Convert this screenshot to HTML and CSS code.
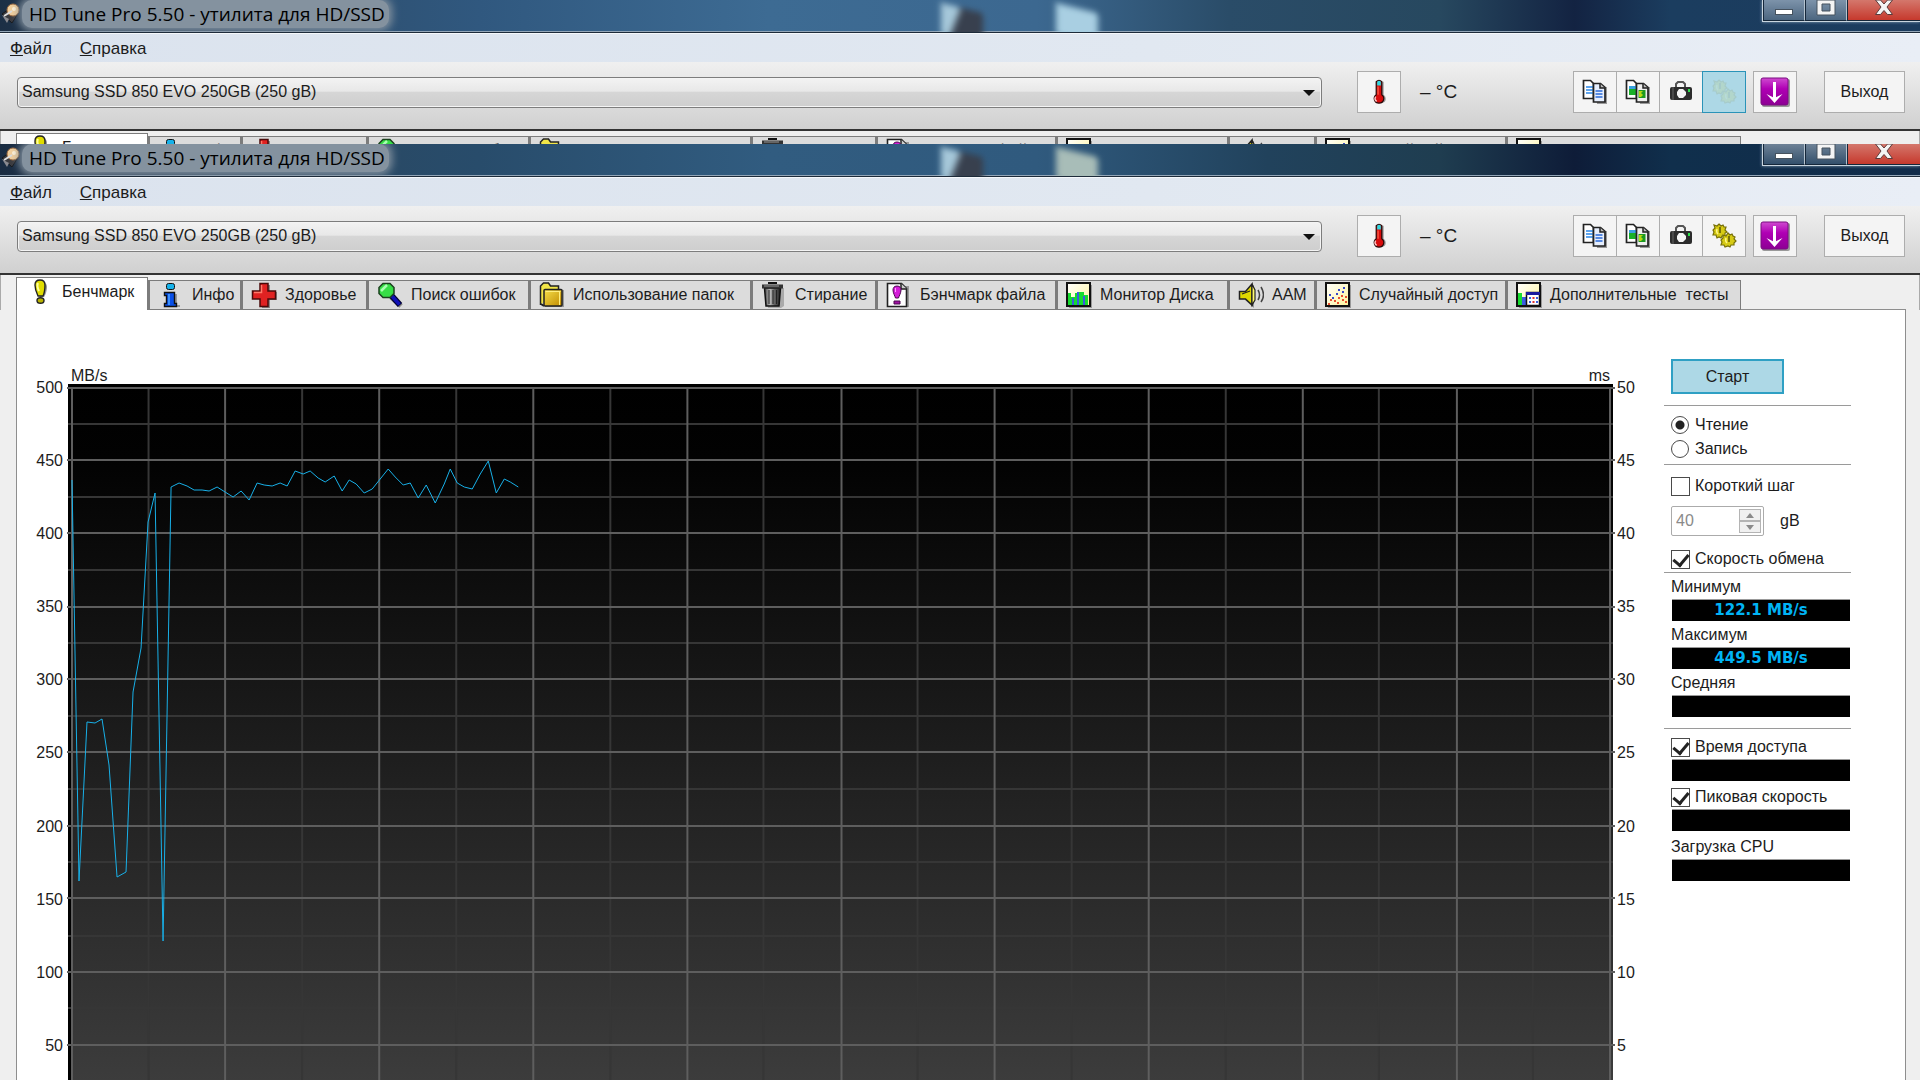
FILE: index.html
```html
<!DOCTYPE html>
<html lang="ru">
<head>
    <meta charset="UTF-8">
    <meta name="viewport" content="width=device-width, initial-scale=1.0">
    <title>HD Tune Pro 5.50 - утилита для HD/SSD</title>
    <link rel="stylesheet" href="styles.css">
</head>
<body>

<!-- Shared icons -->
<svg class="sprite" aria-hidden="true">
    <linearGradient id="gold" x1="0" y1="0" x2="1" y2="1"><stop offset="0" stop-color="#f6e04a"/><stop offset="1" stop-color="#c08a00"/></linearGradient>
    <linearGradient id="violet" x1="0" y1="0" x2="0" y2="1"><stop offset="0" stop-color="#cf4ad0"/><stop offset=".4" stop-color="#b000b4"/><stop offset="1" stop-color="#8d0094"/></linearGradient>
    <linearGradient id="steel"><stop offset="0" stop-color="#444"/><stop offset=".35" stop-color="#bbb"/><stop offset=".6" stop-color="#666"/><stop offset="1" stop-color="#222"/></linearGradient>
    <linearGradient id="cream" x1="0" y1="0" x2="1" y2="1"><stop offset="0" stop-color="#fff"/><stop offset="1" stop-color="#fff59a"/></linearGradient>
    <symbol id="i-app" viewBox="0 0 22 22">
        <path d="M2 12 12 5l7 5-7 11z" fill="#3a3a3e" stroke="#16181c"/>
        <path d="m2 13 7 4-2 4z" fill="#8a8a90"/>
        <circle cx="13" cy="8" r="6" fill="#f2cf9c" stroke="#a06e42"/>
        <circle cx="14" cy="7" r="2" fill="#fff2d8"/>
        <path d="m4 14 8-5" stroke="#ddd" stroke-width="2"/>
    </symbol>
    <symbol id="i-bang" viewBox="0 0 26 26">
        <path d="M13 2c3 0 5 2 5 5 0 4-2 9-3 10h-4c-1-1-3-6-3-10 0-3 2-5 5-5z" transform="translate(1 1)" fill="#999"/>
        <path d="M12 1c3 0 5 2 5 5 0 4-1 9-2 11H10C9 15 7 10 7 6c0-3 2-5 5-5z" fill="#e0dc00" stroke="#222" stroke-width="1.4"/>
        <path d="M10 4c-1 2 0 6 1 8" stroke="#ffffa0" stroke-width="2" fill="none"/>
        <ellipse cx="12.500" cy="21.500" rx="3.500" ry="2.800" fill="#b9b300" stroke="#222" stroke-width="1.400"/>
    </symbol>
    <symbol id="i-info" viewBox="0 0 26 26">
        <path d="M10 12h9v11h3v2H9z" fill="#999"/>
        <rect x="8.500" y="1.500" width="8" height="6" rx="2" fill="#16b2ea" stroke="#111"/>
        <path d="M6.500 10.500h10v11h2v3h-12v-3h2v-8h-2z" fill="#0a50e8" stroke="#111" stroke-width="1.400"/>
        <path d="M11 12v11" stroke="#3a90ff" stroke-width="2"/>
    </symbol>
    <symbol id="i-health" viewBox="0 0 26 26">
        <path d="M10 3h9v7h7v8h-7v8h-8z" fill="#888"/>
        <path d="M9 1.500h8V9h7.500v8H17v7.500H9V17H1.500V9H9z" fill="#e02222" stroke="#4a0a0a" stroke-width="1.500"/>
        <path d="M10.500 3v7.500H3" stroke="#ff7a6a" stroke-width="1.500" fill="none"/>
    </symbol>
    <symbol id="i-search" viewBox="0 0 26 26">
        <path d="m14 15 10 9" stroke="#888" stroke-width="5"/>
        <path d="m14 13 9 10" stroke="#000030" stroke-width="6"/>
        <path d="m14 13 8.500 9.500" stroke="#1010b8" stroke-width="3.500"/>
        <path d="m6 1.500 7 0 4 4v6l-4 4H6l-4-4v-6z" fill="#36de46" stroke="#1a401e" stroke-width="1.500"/>
        <path d="m4 9 6-6" stroke="#a8ffb0" stroke-width="2.500"/>
    </symbol>
    <symbol id="i-folder" viewBox="0 0 26 26">
        <path d="M5 8h20v17H6z" fill="#999"/>
        <path d="M1.500 23V4l3-3h5l2 3h8v4" fill="#f2e648" stroke="#222" stroke-width="1.500"/>
        <path d="M1.500 23V6" stroke="#222"/>
        <rect x="5" y="7.500" width="18" height="16.500" rx="1" fill="url(#gold)" stroke="#222" stroke-width="1.500"/>
        <path d="m2 22 3 2" stroke="#222" stroke-width="2"/>
        <path d="M6.500 9.500h15M20.500 10v13" stroke="#ffef80"/>
    </symbol>
    <symbol id="i-trash" viewBox="0 0 26 26">
        <path d="M5 6h18v18l-3 2H7z" fill="#aaa"/>
        <path d="M3.500 6h16L18 24H5z" fill="url(#steel)" stroke="#111" stroke-width="1.500"/>
        <path d="M8 8v14M12 8v14M15.500 8v14" stroke="#222"/>
        <path d="M1 2.500h21v4H1z" fill="#333"/>
        <path d="M3 4h15" stroke="#999"/>
        <path d="M8 2V1h7v1" stroke="#111" stroke-width="2" fill="none"/>
    </symbol>
    <symbol id="i-file" viewBox="0 0 26 26">
        <path d="M4 4h19v21H4z" fill="#999"/>
        <path d="M1.500 1.500h14l5 5v18h-19z" fill="#fff" stroke="#222" stroke-width="1.600"/>
        <path d="M15 1.500V7h6" fill="#ccc" stroke="#222" stroke-width="1.500"/>
        <path d="M11 4c3 0 4 2 4 4 0 3-2 6-2.500 8h-3C9 14 7 11 7 8c0-2 1-4 4-4z" fill="#d41cd8" stroke="#4a084c"/>
        <path d="M9.500 6v4" stroke="#ff9aff"/>
        <path d="M8 19h6v3H8z" fill="#a010a4" stroke="#4a084c"/>
    </symbol>
    <symbol id="i-monitor" viewBox="0 0 26 26">
        <path d="M3 3h23v23H3z" fill="#999"/>
        <rect x="1" y="1" width="23" height="23" fill="url(#cream)" stroke="#111" stroke-width="2"/>
        <path d="M2 23V11h3v4h4v-4h4v-1h5v3h4v10z" fill="#16dc2e"/>
        <path d="M6 23v-7h2v7zM11 23V10h2v13zM17 23v-9h2v9z" fill="#3a5ce0"/>
    </symbol>
    <symbol id="i-sound" viewBox="0 0 26 26">
        <path d="M6 10 16 3v23l-9-8z" fill="#999"/>
        <path d="M1.500 9.500h6L14 2v21l-6.500-6h-6z" fill="#ded800" stroke="#222" stroke-width="1.500"/>
        <path d="m14 2 3 6v10l-3 5zM4 12l8-3" stroke="#222" stroke-width="1.200" fill="#fffb70"/>
        <path d="M20 8q3 5 0 10M23 5q5 8 0 15" stroke="#444" stroke-width="1.500" fill="none"/>
    </symbol>
    <symbol id="i-random" viewBox="0 0 26 26">
        <path d="M3 3h23v23H3z" fill="#999"/>
        <rect x="1" y="1" width="23" height="23" fill="url(#cream)" stroke="#111" stroke-width="2"/>
        <path d="M4 12h2v2H4zM7 15h2v2H7zM11 11h2v2h-2zM13 7h2v2h-2zM17 9h2v2h-2zM18 5h2v2h-2z" fill="#3848c8"/>
        <path d="M3 21h2v2H3zM5 17h2v2H5zM9 18h2v2H9zM13 15h2v2h-2zM12 20h2v2h-2zM17 17h2v2h-2zM16 13h2v2h-2zM20 19h2v2h-2zM20 14h2v2h-2z" fill="#e85030"/>
    </symbol>
    <symbol id="i-extra" viewBox="0 0 26 26">
        <path d="M3 3h23v23H3z" fill="#999"/>
        <rect x="1" y="1" width="23" height="23" fill="url(#cream)" stroke="#111" stroke-width="2"/>
        <path d="M2 11h4v12H2z" fill="#16dc2e"/>
        <path d="M6 15h4v8H6z" fill="#3a5ce0"/>
        <path d="M10.500 10.500h13v13h-13z" fill="#fff" stroke="#111" stroke-width="1.500"/>
        <path d="M10 10h14v3H10z" fill="#1a1a9c"/>
        <path d="M13 15h2v2h-2zM13 19h2v2h-2zM20 15h2v2h-2zM20 19h2v2h-2z" fill="#3a5ce0"/>
        <path d="M16.500 15h2v2h-2zM16.500 19h2v2h-2z" fill="#e03030"/>
    </symbol>
    <symbol id="i-temp" viewBox="0 0 26 28">
        <path d="M12 3h6v14c3 2 4 9-3 9z" fill="#999"/>
        <path d="M10 3q3-3 6 0v14c4 3 2 9-3 9s-7-6-3-9z" fill="#d80c0c" stroke="#2a0606" stroke-width="1.300"/>
        <path d="M11 3q2-2 4 0v4h-4z" fill="#30d8e0"/>
        <path d="M9.500 19q-2 3 1 5" stroke="#ffc0c0" stroke-width="1.600" fill="none"/>
        <path d="M12 8v9" stroke="#ff6a50" stroke-width="1.200"/>
    </symbol>
    <symbol id="i-copy" viewBox="0 0 26 26">
        <path d="M14 8h11v17H15z" fill="#999"/>
        <path d="M1.500 1.500h7l3 3v15h-10z" fill="#fff" stroke="#222" stroke-width="1.700"/>
        <path d="M4 8h7M4 11h7M4 14h7" stroke="#2a86e8" stroke-width="1.500"/>
        <path d="M11.500 4.500h7l4.500 4V23H11.500z" fill="#e6eefc" stroke="#222" stroke-width="1.700"/>
        <path d="M18 4.500V9h5" stroke="#222" stroke-width="1.500" fill="#bbb"/>
        <path d="M13.500 12h7M13.500 15h7M13.500 18h7" stroke="#2a6ad8" stroke-width="1.500"/>
    </symbol>
    <symbol id="i-shots" viewBox="0 0 26 26">
        <path d="M14 8h11v17H15z" fill="#999"/>
        <path d="M1.500 1.500h7l3 3v15h-10z" fill="#fff" stroke="#222" stroke-width="1.700"/>
        <path d="M4 7h7v9H4z" fill="#18b028"/>
        <path d="M4 7h7v3H4z" fill="#38a0e0"/>
        <path d="M11.500 4.500h7l4.500 4V23H11.500z" fill="#eee" stroke="#222" stroke-width="1.700"/>
        <path d="M18 4.500V9h5" stroke="#222" stroke-width="1.500" fill="#bbb"/>
        <path d="M13.500 11h7v8h-7z" fill="#1c9a20"/>
        <path d="m14 12 4 0-2 2 2 2-2 2h-2z" fill="#b8d810"/>
    </symbol>
    <symbol id="i-camera" viewBox="0 0 26 26">
        <path d="M8 8V5l2-2h5l2 2v3" fill="none" stroke="#555" stroke-width="2"/>
        <rect x="2" y="8" width="22" height="13" rx="2" fill="#2c2c2c"/>
        <path d="M5 8v13" stroke="#666"/>
        <path d="m11 10 4 0 3 3v3l-3 3h-4l-2-3v-3z" fill="#f4f4f4"/>
        <path d="M20 10h2v3h-2z" fill="#2ce04a"/>
    </symbol>
    <symbol id="i-gears" viewBox="0 0 26 26">
        <g fill="#d6ca14" stroke="#77700a" stroke-width="1.200">
            <path d="m8 1 2 2 2-1 1 2 2 0-1 3 2 2-2 1 0 3-3 0-1 2-2-1-2 1-1-3-3 0 1-3-1-2 2-2-1-3 3 1z"/>
            <path d="m17 10 2 2 2-1 1 2 2 1-1 2 2 2-2 2 0 2-3 0-1 2-2-1-3 1-1-2-3 0 1-3-1-2 2-2 0-3 3 1z"/>
        </g>
        <path d="M9 4v6M18 13v6" stroke="#5c5606" stroke-width="1.500"/>
        <path d="M6 6q-1 3 1 5M15 15q-1 3 1 5" stroke="#fff68a" stroke-width="1.500" fill="none"/>
    </symbol>
    <symbol id="i-save" viewBox="0 0 30 30">
        <rect x="2" y="2" width="28" height="28" rx="2" fill="#999"/>
        <rect x="1" y="1" width="27" height="27" rx="2" fill="url(#violet)" stroke="#7a0c80"/>
        <path d="M14.500 5v18" stroke="#fff" stroke-width="3"/>
        <path d="m6.500 17 8 4 8-4-8 9z" fill="#fff"/>
    </symbol>
    <symbol id="i-min" viewBox="0 0 20 16"><rect x="1.500" y="9.500" width="17" height="5" fill="#fff" stroke="#46525e"/></symbol>
    <symbol id="i-max" viewBox="0 0 20 16"><path d="M1 0h18v15H1zM6 4v7h8V4z" fill="#f4f4f4" fill-rule="evenodd" stroke="#46525e"/></symbol>
    <symbol id="i-close" viewBox="0 0 20 16"><path d="M1.500 0h5L10 4l3.500-4h5l-5.500 7 5.500 7.500h-5L10 10.500l-3.500 4h-5L7 7z" fill="#f4f4f4" stroke="#5c3a3a"/></symbol>
</svg>

<!-- Back window, only its top is visible -->
<section class="window window-back">
    <header class="titlebar">
        <svg class="app-icon"><use href="#i-app"/></svg>
        <span class="title">HD Tune Pro 5.50 - утилита для HD/SSD</span>
        <span class="ghost ghost-one"></span>
        <span class="ghost ghost-two"></span>
        <div class="controls">
            <button class="ctl" aria-label="Свернуть"><svg><use href="#i-min"/></svg></button>
            <button class="ctl" aria-label="Развернуть"><svg><use href="#i-max"/></svg></button>
            <button class="ctl ctl-close" aria-label="Закрыть"><svg><use href="#i-close"/></svg></button>
        </div>
    </header>
    <nav class="menu">
        <a href="#"><u>Ф</u>айл</a>
        <a href="#"><u>С</u>правка</a>
    </nav>
    <div class="toolbar">
        <div class="combo"><select aria-label="Диск"><option>Samsung SSD 850 EVO 250GB (250 gB)</option></select></div>
        <button class="tool" aria-label="Температура"><svg><use href="#i-temp"/></svg></button>
        <span class="temp">– °C</span>
        <div class="tool-group">
            <button class="tool" aria-label="Копировать текст"><svg><use href="#i-copy"/></svg></button>
            <button class="tool" aria-label="Копировать рисунок"><svg><use href="#i-shots"/></svg></button>
            <button class="tool" aria-label="Снимок"><svg><use href="#i-camera"/></svg></button>
            <button class="tool tool-active" aria-label="Настройки"><svg><use href="#i-gears"/></svg></button>
        </div>
        <button class="tool tool-save" aria-label="Сохранить"><svg><use href="#i-save"/></svg></button>
        <button class="exit">Выход</button>
    </div>
    <div class="tabs">
        <button class="tab tab-active"><svg><use href="#i-bang"/></svg>Бенчмарк</button>
        <button class="tab"><svg><use href="#i-info"/></svg>Инфо</button>
        <button class="tab"><svg><use href="#i-health"/></svg>Здоровье</button>
        <button class="tab"><svg><use href="#i-search"/></svg>Поиск ошибок</button>
        <button class="tab"><svg><use href="#i-folder"/></svg>Использование папок</button>
        <button class="tab"><svg><use href="#i-trash"/></svg>Стирание</button>
        <button class="tab"><svg><use href="#i-file"/></svg>Бэнчмарк файла</button>
        <button class="tab"><svg><use href="#i-monitor"/></svg>Монитор Диска</button>
        <button class="tab"><svg><use href="#i-sound"/></svg>AAM</button>
        <button class="tab"><svg><use href="#i-random"/></svg>Случайный доступ</button>
        <button class="tab"><svg><use href="#i-extra"/></svg>Дополнительные&nbsp; тесты</button>
    </div>
</section>

<!-- Front window -->
<section class="window window-front">
    <header class="titlebar">
        <svg class="app-icon"><use href="#i-app"/></svg>
        <span class="title">HD Tune Pro 5.50 - утилита для HD/SSD</span>
        <span class="ghost ghost-one"></span>
        <span class="ghost ghost-two"></span>
        <div class="controls">
            <button class="ctl" aria-label="Свернуть"><svg><use href="#i-min"/></svg></button>
            <button class="ctl" aria-label="Развернуть"><svg><use href="#i-max"/></svg></button>
            <button class="ctl ctl-close" aria-label="Закрыть"><svg><use href="#i-close"/></svg></button>
        </div>
    </header>
    <nav class="menu">
        <a href="#"><u>Ф</u>айл</a>
        <a href="#"><u>С</u>правка</a>
    </nav>
    <div class="toolbar">
        <div class="combo"><select aria-label="Диск"><option>Samsung SSD 850 EVO 250GB (250 gB)</option></select></div>
        <button class="tool" aria-label="Температура"><svg><use href="#i-temp"/></svg></button>
        <span class="temp">– °C</span>
        <div class="tool-group">
            <button class="tool" aria-label="Копировать текст"><svg><use href="#i-copy"/></svg></button>
            <button class="tool" aria-label="Копировать рисунок"><svg><use href="#i-shots"/></svg></button>
            <button class="tool" aria-label="Снимок"><svg><use href="#i-camera"/></svg></button>
            <button class="tool" aria-label="Настройки"><svg><use href="#i-gears"/></svg></button>
        </div>
        <button class="tool tool-save" aria-label="Сохранить"><svg><use href="#i-save"/></svg></button>
        <button class="exit">Выход</button>
    </div>
    <div class="tabs">
        <button class="tab tab-active"><svg><use href="#i-bang"/></svg>Бенчмарк</button>
        <button class="tab"><svg><use href="#i-info"/></svg>Инфо</button>
        <button class="tab"><svg><use href="#i-health"/></svg>Здоровье</button>
        <button class="tab"><svg><use href="#i-search"/></svg>Поиск ошибок</button>
        <button class="tab"><svg><use href="#i-folder"/></svg>Использование папок</button>
        <button class="tab"><svg><use href="#i-trash"/></svg>Стирание</button>
        <button class="tab"><svg><use href="#i-file"/></svg>Бэнчмарк файла</button>
        <button class="tab"><svg><use href="#i-monitor"/></svg>Монитор Диска</button>
        <button class="tab"><svg><use href="#i-sound"/></svg>AAM</button>
        <button class="tab"><svg><use href="#i-random"/></svg>Случайный доступ</button>
        <button class="tab"><svg><use href="#i-extra"/></svg>Дополнительные&nbsp; тесты</button>
    </div>

    <main class="panel">
        <div class="axis axis-left">
            <span>500</span><span>450</span><span>400</span><span>350</span><span>300</span><span>250</span><span>200</span><span>150</span><span>100</span><span>50</span><span>0</span>
        </div>
        <div class="chart">
            <div class="units"><span>MB/s</span><span>ms</span></div>
            <svg class="plot" viewBox="0 0 1544 740" preserveAspectRatio="none">
                <linearGradient id="night" x1="0" y1="0" x2="0" y2="1"><stop offset="0"/><stop offset=".1" stop-color="#020202"/><stop offset="1" stop-color="#404040"/></linearGradient>
                <rect width="1544" height="740" fill="url(#night)"/>
                <rect width="3" height="740" fill="#000"/>
                <path class="grid-minor" d="M0 40H1544M0 113H1544M0 186H1544M0 259H1544M0 332H1544M0 405H1544M0 478H1544M0 552H1544M0 624H1544M0 698H1544M80.500 4V740M234 4V740M388 4V740M542 4V740M695 4V740M849 4V740M1003 4V740M1157 4V740M1310 4V740M1464 4V740"/>
                <path class="grid-major" d="M-1 4H1546M-1 76H1546M-1 149H1546M-1 223H1546M-1 295H1546M-1 368H1546M-1 442H1546M-1 514H1546M-1 588H1546M-1 661H1546M-1 735H1546M4 4V740M157 4V740M311 4V740M465 4V740M619 4V740M773 4V740M926 4V740M1080 4V740M1234 4V740M1388 4V740M1541 4V740"/>
                <polyline class="speed" points="4,96 11,497 19,338 27,339 34,335 41,381 49,493 58,488 65,308 73,264 80,138 87,109 95,557 103,103 111,99 119,102 126,106 134,106 141,107 149,103 157,108 165,113 173,107 181,116 189,99 196,101 204,102 212,99 219,102 227,87 235,90 242,87 250,94 257,98 266,92 274,107 281,96 288,100 296,109 304,105 312,95 320,85 327,93 335,101 342,99 350,114 358,101 367,119 376,100 382,85 389,99 396,103 404,105 412,90 420,77 428,109 436,95 442,98 450,103"/>
            </svg>
        </div>
        <div class="axis axis-right">
            <span>50</span><span>45</span><span>40</span><span>35</span><span>30</span><span>25</span><span>20</span><span>15</span><span>10</span><span>5</span><span>0</span>
        </div>
        <form class="side">
            <button type="button" class="start">Старт</button>
            <div class="group">
                <label class="radio-row"><input type="radio" name="mode" checked>Чтение</label>
                <label class="radio-row"><input type="radio" name="mode">Запись</label>
            </div>
            <div class="group group-step">
                <label class="check-row"><input type="checkbox">Короткий шаг</label>
                <div class="step-row">
                    <div class="spin">
                        <input type="text" id="step" value="40" disabled>
                        <div class="spin-buttons">
                            <button type="button" disabled aria-label="Больше"><svg viewBox="0 0 8 5"><path d="M0 5 4 0l4 5z"/></svg></button>
                            <button type="button" disabled aria-label="Меньше"><svg viewBox="0 0 8 5"><path d="m0 0 4 5 4-5z"/></svg></button>
                        </div>
                    </div>
                    <label for="step">gB</label>
                </div>
                <label class="check-row"><input type="checkbox" checked>Скорость обмена</label>
            </div>
            <div class="group group-speed">
                <label for="minSpeed">Минимум</label>
                <output id="minSpeed">122.1 MB/s</output>
                <label for="maxSpeed">Максимум</label>
                <output id="maxSpeed">449.5 MB/s</output>
                <label for="avgSpeed">Средняя</label>
                <output id="avgSpeed"></output>
            </div>
            <div class="group group-access">
                <label class="check-row"><input type="checkbox" checked>Время доступа</label>
                <output></output>
                <label class="check-row"><input type="checkbox" checked>Пиковая скорость</label>
                <output></output>
                <label for="cpuLoad">Загрузка CPU</label>
                <output id="cpuLoad"></output>
            </div>
        </form>
    </main>
</section>

</body>
</html>
```
FILE: styles.css
```css
* {
    box-sizing: border-box;
}
body {
    margin: 0;
    height: 100vh;
    overflow: hidden;
    display: flex;
    flex-direction: column;
    background-color: #efefef;
    color: #1c1c1c;
    font-family: "Liberation Sans", Arial, sans-serif;
    font-size: 16px;
    line-height: 20px;
}
button, select, input {
    font: inherit;
    color: inherit;
    margin: 0;
    padding: 0;
}
.sprite {
    position: absolute;
    width: 0;
    height: 0;
}
.window {
    overflow: hidden;
}
.window-back {
    flex: 0 0 144px;
}
.window-front {
    flex: 1;
}

/* Title bar */
.titlebar {
    position: relative;
    display: flex;
    align-items: flex-start;
    height: 33px;
    overflow: hidden;
    border-bottom: 1px solid #1d2b3a;
    box-shadow: inset 0 -1px #93a6b8;
    background: linear-gradient(90deg, #1c2f45 0%, #2c4a66 12%, #30587f 25%, #3d6b93 40%, #3c6890 54%, #2a4c68 64%, #27485f 75%, #132342 82%, #1b3d5f 87%, #1c3c5e 100%);
}
.window-front .titlebar {
    background: linear-gradient(90deg, #1a2c42 0%, #2a465e 12%, #284c6b 25%, #315c80 40%, #305a7e 54%, #21425c 66%, #1f3d50 75%, #0e1c38 82%, #102f4c 87%, #112c4a 100%);
}
.app-icon {
    flex: none;
    width: 22px;
    height: 22px;
    margin-top: 2px;
}
.title {
    padding: 0 4px 0 7px;
    border-radius: 10px;
    background-color: #84929f;
    box-shadow: 0 0 8px 3px #84929f;
    color: #000;
    font-family: "Open Sans", "Noto Sans", sans-serif;
    font-size: 19px;
    line-height: 28px;
}
/* Desktop icons showing through the glass */
.ghost {
    position: absolute;
    top: 8px;
    left: 49%;
    width: 42px;
    height: 32px;
    filter: blur(3px);
    transform: skewY(14deg);
    background: linear-gradient(110deg, #a6c8da 35%, #38404e 40%, #38404e 90%);
}
.ghost-two {
    left: 55%;
    background: #a9cfe2;
}
.window-front .ghost-two {
    background: #a8bdb8;
}
.controls {
    display: flex;
    margin-left: auto;
    height: 22px;
    border: solid #c9d5df;
    border-width: 0 0 1px 1px;
    box-shadow: 0 0 3px #8aa2b8;
}
.ctl {
    width: 42px;
    border: 1px solid #15273a;
    border-top: 0;
    border-right-color: #b5c3cf;
    background: linear-gradient(#7d93aa, #4c6680);
}
.window-front .ctl {
    background: linear-gradient(#6e8296, #33506c);
}
.ctl svg {
    display: block;
    width: 20px;
    height: 16px;
    margin: 0 auto 5px;
}
.window .ctl-close {
    width: 73px;
    border-right: 0;
    background: linear-gradient(#d4776c, #c6392d);
}

/* Menu and toolbar */
.menu {
    display: flex;
    gap: 28px;
    height: 29px;
    padding: 5px 10px;
    border-top: 1px solid #f5f8fb;
    background: linear-gradient(90deg, #dbe3ee, #e1e8f1 60%, #e9eef6);
    font-size: 17px;
}
.menu a {
    color: inherit;
    text-decoration: none;
}
.toolbar {
    display: flex;
    align-items: center;
    height: 69px;
    padding: 0 15px 7px 17px;
    border-bottom: 2px solid #333;
    background: linear-gradient(#f0f0f0, #d0d0d0);
}
.combo {
    position: relative;
    flex: 1;
}
.combo::after {
    content: "";
    position: absolute;
    right: 7px;
    top: 13px;
    border: 6px solid transparent;
    border-top-color: #111;
    border-bottom: 0;
    pointer-events: none;
}
.combo select {
    display: block;
    width: 100%;
    height: 31px;
    padding-left: 4px;
    appearance: none;
    border: 1px solid #7d7d7d;
    border-radius: 4px;
    box-shadow: inset 0 0 0 1px #f4f4f4;
    background: linear-gradient(#f3f3f3, #e8e8e8 45%, #d6d6d6 50%, #cecece);
}
.tool, .exit {
    flex: none;
    width: 44px;
    height: 42px;
    border: 1px solid #adadad;
    background-color: #f4f4f4;
}
.tool svg {
    display: block;
    width: 26px;
    height: 26px;
    margin: auto;
}
.combo + .tool {
    margin-left: 35px;
}
.temp {
    width: 172px;
    padding-left: 19px;
    font-size: 19px;
}
.tool-group {
    display: flex;
}
.tool-group .tool + .tool {
    margin-left: -1px;
}
.tool-active {
    border-color: #2a93b8;
    background-color: #add8e6;
}
.tool-active svg {
    opacity: 0.12;
}
.tool-save {
    margin: 0 27px 0 7px;
}
.tool-save svg {
    width: 30px;
    height: 30px;
}
.exit {
    width: 81px;
}

/* Tabs */
.tabs {
    display: grid;
    grid-template-columns: 132px 93px 126px 162px 222px 125px 180px 172px 87px 191px 235px;
    align-items: end;
    height: 35px;
    padding-left: 15px;
    border-left: 1px solid #aaa;
    border-right: 1px solid #aaa;
    background-color: #efefef;
}
.tab {
    display: flex;
    align-items: center;
    gap: 8px;
    height: 30px;
    padding-left: 8px;
    white-space: pre;
    border: 1px solid #7c7c7c;
    border-left-width: 2px;
    background-color: #dcdcdc;
}
.tab svg {
    flex: none;
    width: 26px;
    height: 26px;
}
.tab-active {
    position: relative;
    z-index: 1;
    height: 33px;
    padding: 0 0 4px 11px;
    border-left-width: 1px;
    border-bottom: 0;
    background-color: #fff;
}

/* Benchmark page */
.panel {
    display: grid;
    grid-template-columns: 51px 1fr 51px 187px;
    margin: -1px 14px 0 16px;
    padding-right: 54px;
    border: solid #8e8e8e;
    border-width: 1px 1px 0;
    background-color: #fff;
}
.axis {
    display: flex;
    flex-direction: column;
    justify-content: space-between;
    height: 751px;
    margin-top: 68px;
}
.axis-left {
    align-items: flex-end;
    padding-right: 5px;
}
.axis-right {
    padding-left: 4px;
}
.units {
    display: flex;
    justify-content: space-between;
    align-items: flex-end;
    height: 74px;
    padding: 0 3px;
    line-height: 16px;
}
.plot {
    display: block;
    width: 100%;
    height: 740px;
    overflow: visible;
}
.grid-minor, .grid-major, .speed {
    fill: none;
    vector-effect: non-scaling-stroke;
}
.grid-minor {
    stroke: #363636;
    stroke-width: 2;
}
.grid-major {
    stroke: #5e5e5e;
    stroke-width: 2;
}
.speed {
    stroke: #18b0e8;
    stroke-width: 1;
}

/* Side controls */
.side {
    padding-top: 49px;
}
.side label {
    display: block;
}
.start {
    display: block;
    width: 113px;
    height: 35px;
    margin: 0 0 11px 7px;
    border: 2px solid #2fa0c4;
    background-color: #add8e6;
}
.group {
    padding: 7px 1px 3px 7px;
    border-top: 1px solid #9a9a9a;
}
.side .radio-row, .side .check-row {
    display: flex;
    align-items: center;
    gap: 5px;
    height: 24px;
}
.side .check-row {
    height: 20px;
}
.radio-row input, .check-row input {
    flex: none;
    appearance: none;
    width: 19px;
    height: 19px;
    border: 1px solid #4a4a4a;
    background-color: #fff;
}
.radio-row input {
    width: 18px;
    height: 18px;
    margin-right: 1px;
    border-radius: 50%;
}
.radio-row input:checked {
    background: radial-gradient(circle, #222 4px, #fff 5px);
}
.check-row input:checked::after {
    content: "";
    display: block;
    width: 7px;
    height: 12px;
    margin: 0 auto;
    border: solid #222;
    border-width: 0 3px 3px 0;
    transform: rotate(40deg);
}
.group-step {
    padding: 11px 1px 3px 7px;
}
.step-row {
    display: flex;
    align-items: center;
    gap: 16px;
    margin: 10px 0 13px;
}
.spin {
    display: flex;
    width: 93px;
    height: 30px;
    padding: 2px;
    border: 1px solid #ababab;
    border-radius: 2px;
}
.spin input {
    flex: 1;
    min-width: 0;
    padding-left: 2px;
    border: 0;
    background: none;
    color: #8a8a8a;
}
.spin-buttons {
    display: flex;
    flex-direction: column;
    width: 22px;
}
.spin-buttons button {
    display: flex;
    align-items: center;
    justify-content: center;
    flex: 1;
    border: 1px solid #b4b4b4;
    background-color: #f0f0f0;
}
.spin-buttons svg {
    width: 8px;
    height: 5px;
    fill: #8a8a8a;
}
.side output {
    display: block;
    height: 22px;
    margin: 2px 0 4px 1px;
    border-top: 1px solid #999;
    background-color: #000;
    color: #00b4f5;
    font-family: "DejaVu Sans", Verdana, sans-serif;
    font-size: 15px;
    font-weight: bold;
    line-height: 21px;
    text-align: center;
}
.group-speed {
    padding: 4px 1px 7px 7px;
}
.group-access {
    padding-top: 8px;
}
.group-access output {
    margin: 2px 0 6px 1px;
}
```
